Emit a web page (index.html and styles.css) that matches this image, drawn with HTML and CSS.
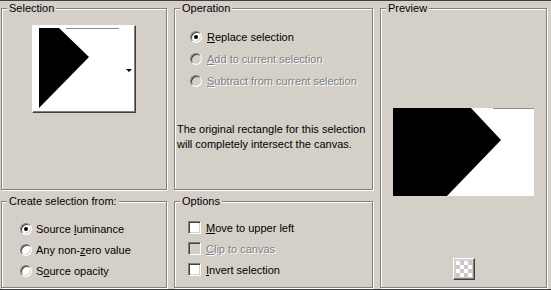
FILE: index.html
```html
<!DOCTYPE html>
<html lang="en">
<head>
    <meta charset="UTF-8">
    <title>Selection From Mask</title>
    <link rel="stylesheet" href="styles.css">
</head>
<body>
    <div class="dialog">
        <!-- Selection thumbnail -->
        <fieldset class="group group-selection">
            <legend>Selection</legend>
            <div class="thumb-button">
                <svg class="thumb" width="80" height="80" viewBox="0 0 80 80">
                    <rect width="80" height="80" fill="#fff"/>
                    <line x1="27" y1="0.5" x2="80" y2="0.5" stroke="#8c8c8c"/>
                    <polygon points="0,0 20,0 50,29 0,80" fill="#000"/>
                </svg>
                <span class="drop-arrow"></span>
            </div>
        </fieldset>

        <!-- Operation -->
        <fieldset class="group group-operation">
            <legend>Operation</legend>
            <div class="option-list">
                <div class="option"><span class="radio checked"></span><span><u>R</u>eplace selection</span></div>
                <div class="option disabled"><span class="radio"></span><span><u>A</u>dd to current selection</span></div>
                <div class="option disabled"><span class="radio"></span><span><u>S</u>ubtract from current selection</span></div>
            </div>
            <p class="note">The original rectangle for this selection<br>will completely intersect the canvas.</p>
        </fieldset>

        <!-- Preview -->
        <fieldset class="group group-preview">
            <legend>Preview</legend>
            <svg class="preview" width="141" height="88" viewBox="0 0 141 88">
                <rect width="141" height="88" fill="#fff"/>
                <line x1="100" y1="0.5" x2="141" y2="0.5" stroke="#8c8c8c"/>
                <polygon points="0,0 78,0 108,32 54,88 0,88" fill="#000"/>
            </svg>
            <div class="checker-button"><span class="checker"></span></div>
        </fieldset>

        <!-- Create selection from -->
        <fieldset class="group group-source">
            <legend>Create selection from:</legend>
            <div class="option-list">
                <div class="option"><span class="radio checked"></span><span>Source <u>l</u>uminance</span></div>
                <div class="option"><span class="radio"></span><span>Any non-<u>z</u>ero value</span></div>
                <div class="option"><span class="radio"></span><span>S<u>o</u>urce opacity</span></div>
            </div>
        </fieldset>

        <!-- Options -->
        <fieldset class="group group-options">
            <legend>Options</legend>
            <div class="option-list">
                <div class="option"><span class="check"></span><span><u>M</u>ove to upper left</span></div>
                <div class="option disabled"><span class="check"></span><span><u>C</u>lip to canvas</span></div>
                <div class="option"><span class="check"></span><span><u>I</u>nvert selection</span></div>
            </div>
        </fieldset>
    </div>
</body>
</html>
```

FILE: styles.css
```css
/* Global */
html, body {
    margin: 0;
    padding: 0;
    background: #d4d0c8;
    font-family: 'Liberation Sans', Arial, sans-serif;
    font-size: 11px;
    color: #000;
}

body {
    border-top: 1px solid #404040;
    border-bottom: 1px solid #404040;
    height: 290px;
    box-sizing: border-box;
    overflow: hidden;
}

/* Dialog grid */
.dialog {
    display: grid;
    grid-template-columns: 166px 199px 167px;
    grid-template-rows: 188px 93px;
    column-gap: 7px;
    row-gap: 5px;
    padding: 1px 0 0 1px;
}

/* Etched group box */
.group {
    margin: 0;
    padding: 0;
    min-width: 0;
    border: 1px solid #808080;
    box-shadow: inset 1px 1px 0 #fff, 1px 1px 0 #fff;
    box-sizing: border-box;
}

.group legend {
    margin-left: 5px;
    padding: 0 2px;
    line-height: 13px;
    background: #d4d0c8;
}

.group-preview {
    grid-column: 3;
    grid-row: 1 / 3;
    display: flex;
    flex-direction: column;
    align-items: center;
}

.group-source {
    grid-column: 1;
    grid-row: 2;
}

.group-options {
    grid-column: 2;
    grid-row: 2;
}

/* Selection thumbnail button */
.thumb-button {
    display: flex;
    align-items: center;
    width: 104px;
    height: 88px;
    box-sizing: border-box;
    margin: 10px auto 0;
    padding: 2px 0 0 6px;
    background: #fff;
    border: 1px solid;
    border-color: #fff #404040 #404040 #fff;
    box-shadow: inset -1px -1px 0 #808080, -1px -1px 0 #d4d0c8;
}

.thumb {
    display: block;
    align-self: flex-start;
}

.drop-arrow {
    width: 0;
    height: 0;
    margin-left: 7px;
    border-top: 3px solid #000;
    border-left: 3px solid transparent;
    border-right: 3px solid transparent;
}

/* Radio / checkbox rows */
.option-list {
    display: flex;
    flex-direction: column;
}

.option {
    display: flex;
    align-items: center;
    gap: 5px;
    height: 21px;
}

.option.disabled {
    color: #808080;
    text-shadow: 1px 1px 0 #fff;
}

.radio {
    position: relative;
    width: 12px;
    height: 12px;
    box-sizing: border-box;
    border-radius: 50%;
    background: #fff;
    border: 1px solid;
    border-color: #808080 #fff #fff #808080;
    box-shadow: inset 1px 1px 0 #404040, inset -1px -1px 0 #d4d0c8;
}

.option.disabled .radio {
    background: #d4d0c8;
}

.radio.checked::after {
    content: "";
    position: absolute;
    left: 3px;
    top: 3px;
    width: 4px;
    height: 4px;
    border-radius: 50%;
    background: #000;
}

.check {
    width: 13px;
    height: 13px;
    box-sizing: border-box;
    background: #fff;
    border: 1px solid;
    border-color: #808080 #fff #fff #808080;
    box-shadow: inset 1px 1px 0 #404040, inset -1px -1px 0 #d4d0c8;
}

.option.disabled .check {
    background: #d4d0c8;
}

.group-operation .option-list {
    padding: 11px 0 0 15px;
}

.group-operation .option {
    height: 22px;
}

.note {
    margin: 30px 0 0 2px;
    line-height: 15px;
}

.group-source .option-list {
    padding: 10px 0 0 18px;
}

.group-source .option {
    gap: 4px;
}

.group-options .option-list {
    padding: 9px 0 0 13px;
}

/* Preview */
.preview {
    display: block;
    margin-top: 93px;
}

.checker-button {
    margin-top: auto;
    margin-bottom: 7px;
    width: 22px;
    height: 22px;
    box-sizing: border-box;
    padding: 2px;
    border: 1px solid;
    border-color: #fff #404040 #404040 #fff;
    box-shadow: inset -1px -1px 0 #808080;
}

.checker {
    display: block;
    width: 16px;
    height: 16px;
    background: repeating-conic-gradient(#c8c8c8 0 25%, #fff 0 50%) 0 0 / 8px 8px;
}
```
